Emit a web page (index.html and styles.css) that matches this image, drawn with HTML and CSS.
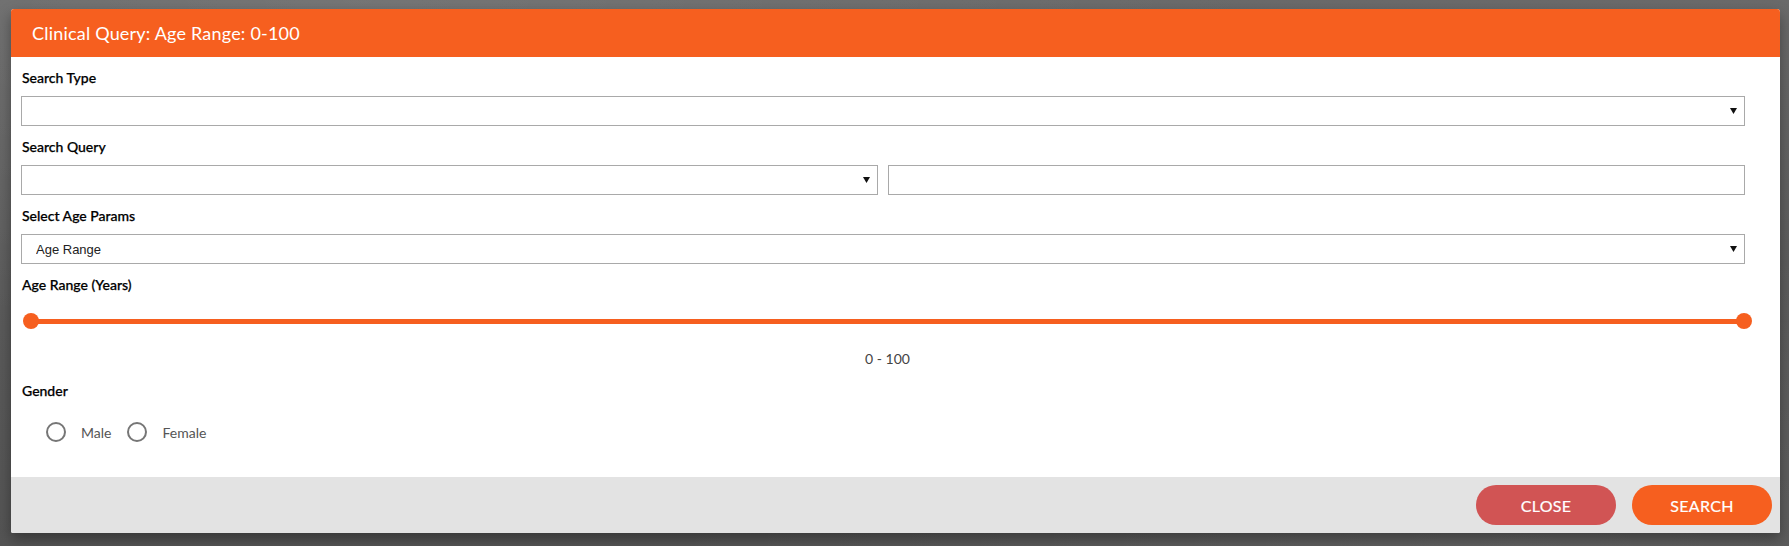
FILE: index.html
```html
<!DOCTYPE html>
<html lang="en">
<head>
<meta charset="utf-8">
<title>Clinical Query</title>
<link rel="stylesheet" href="styles.css">
</head>
<body>
<div class="backdrop">
  <div class="dialog">
    <div class="dialog-header">Clinical Query: Age Range: 0-100</div>
    <div class="dialog-body">
      <div class="group">
        <div class="label">Search Type</div>
        <div class="select-wrap">
          <select class="select"><option></option></select>
          <svg class="arrow" width="7" height="6" viewBox="0 0 7 6"><polygon points="0,0 7,0 3.5,6" fill="#111"/></svg>
        </div>
      </div>
      <div class="group">
        <div class="label">Search Query</div>
        <div class="row">
          <div class="select-wrap half">
            <select class="select"><option></option></select>
            <svg class="arrow" width="7" height="6" viewBox="0 0 7 6"><polygon points="0,0 7,0 3.5,6" fill="#111"/></svg>
          </div>
          <input class="input half" type="text">
        </div>
      </div>
      <div class="group">
        <div class="label">Select Age Params</div>
        <div class="select-wrap">
          <select class="select"><option>Age Range</option></select>
          <svg class="arrow" width="7" height="6" viewBox="0 0 7 6"><polygon points="0,0 7,0 3.5,6" fill="#111"/></svg>
        </div>
      </div>
      <div class="group">
        <div class="label">Age Range (Years)</div>
        <div class="slider">
          <div class="track"></div>
          <span class="handle handle-left"></span>
          <span class="handle handle-right"></span>
        </div>
        <div class="range-value">0 - 100</div>
      </div>
      <div class="group gender">
        <div class="label">Gender</div>
        <div class="radios">
          <label class="radio"><span class="circle"></span><span class="radio-text">Male</span></label>
          <label class="radio"><span class="circle"></span><span class="radio-text">Female</span></label>
        </div>
      </div>
    </div>
    <div class="dialog-footer">
      <button class="btn btn-close">CLOSE</button>
      <button class="btn btn-search">SEARCH</button>
    </div>
  </div>
</div>
</body>
</html>
```
FILE: styles.css
```css
* { box-sizing: border-box; }
html, body { margin: 0; padding: 0; }
body {
  width: 1789px;
  height: 546px;
  overflow: hidden;
  font-family: Lato, "Liberation Sans", sans-serif;
  background: #5d5d5d;
}
.backdrop {
  width: 1789px;
  height: 546px;
  padding: 9px 9px 0 11px;
  background:
    radial-gradient(ellipse at 20% 0%, rgba(255,255,255,0.08), rgba(255,255,255,0) 45%),
    radial-gradient(ellipse at 85% 100%, rgba(255,255,255,0.07), rgba(255,255,255,0) 40%),
    linear-gradient(180deg, #6a6a6a 0%, #5a5a5a 60%, #545454 100%);
}
.dialog {
  width: 1769px;
  height: 524px;
  display: flex;
  flex-direction: column;
  background: #fff;
  border-radius: 3px 3px 2px 2px;
  overflow: hidden;
  box-shadow: 0 6px 14px rgba(0,0,0,0.35);
}
.dialog-header {
  height: 48px;
  flex: none;
  display: flex;
  align-items: center;
  padding-left: 21px;
  background: #f65f1f;
  color: #fff;
  font-size: 18px;
  letter-spacing: 0.2px;
}
.dialog-body {
  flex: 1;
  padding: 11px 35px 0 10px;
}
.group { margin-bottom: 11px; }
.label {
  font-size: 14px;
  line-height: 20px;
  font-weight: 500;
  color: #000;
  padding-left: 1px;
  margin-bottom: 8px;
  -webkit-text-stroke: 0.25px #000;
}
.select-wrap {
  position: relative;
}
.select {
  -webkit-appearance: none;
  appearance: none;
  display: block;
  width: 100%;
  height: 30px;
  border: 1px solid #a9a9a9;
  border-radius: 0;
  background: #fff;
  font-family: "Liberation Sans", Arial, sans-serif;
  font-size: 13px;
  color: #222;
  padding: 0 0 0 14px;
  margin: 0;
}
.arrow {
  position: absolute;
  right: 8px;
  top: 12px;
}
.row {
  display: flex;
  gap: 10px;
}
.half {
  flex: 1 1 50%;
  min-width: 0;
}
.input {
  height: 30px;
  border: 1px solid #a9a9a9;
  border-radius: 0;
  margin: 0;
  padding: 0 6px;
  font-size: 13px;
}
.slider {
  position: relative;
  margin: 18px 0 0 2px;
  width: 1729px;
  height: 16px;
}
.track {
  position: absolute;
  left: 8px;
  right: 8px;
  top: 6px;
  height: 5px;
  background: #f65f1f;
}
.handle {
  position: absolute;
  top: 0;
  width: 16px;
  height: 16px;
  border-radius: 50%;
  background: #f65f1f;
}
.handle-left { left: 0; }
.handle-right { right: 0; }
.range-value {
  margin-top: 20px;
  padding-left: 9px;
  text-align: center;
  font-size: 14px;
  line-height: 20px;
  font-weight: 400;
  color: #444;
}
.group.gender { margin-top: 12px; }
.radios {
  display: flex;
  align-items: center;
  gap: 16px;
  margin-top: 21px;
  padding-left: 25px;
  height: 20px;
}
.radio {
  display: flex;
  align-items: center;
  gap: 15px;
}
.circle {
  width: 20px;
  height: 20px;
  border: 2px solid #767676;
  border-radius: 50%;
}
.radio-text {
  font-size: 14px;
  color: #555;
}
.dialog-footer {
  height: 56px;
  flex: none;
  display: flex;
  justify-content: flex-end;
  align-items: center;
  gap: 16px;
  padding-right: 8px;
  background: #e3e3e3;
}
.btn {
  width: 140px;
  height: 40px;
  border: none;
  border-radius: 20px;
  color: #fff;
  font-family: Lato, "Liberation Sans", sans-serif;
  font-size: 16px;
  font-weight: 400;
  letter-spacing: 0.3px;
  padding: 0;
  -webkit-text-stroke: 0.2px #fff;
}
.btn-close { background: #d15454; }
.btn-search { background: #f65f1f; }
```
